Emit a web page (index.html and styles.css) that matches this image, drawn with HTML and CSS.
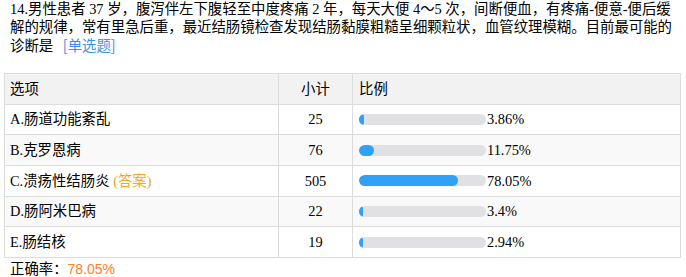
FILE: index.html
```html
<!DOCTYPE html>
<html lang="zh-CN">
<head>
<meta charset="utf-8">
<title>题目统计</title>
<link rel="stylesheet" href="styles.css">
</head>
<body>
<div class="page">
  <p class="question">14.男性患者 37 岁，腹泻伴左下腹轻至中度疼痛 2 年，每天大便 4～5 次，间断便血，有疼痛-便意-便后缓解的规律，常有里急后重，最近结肠镜检查发现结肠黏膜粗糙呈细颗粒状，血管纹理模糊。目前最可能的诊断是 <span class="qtype">[单选题]</span></p>
  <table class="stats">
    <thead>
      <tr><th class="c-opt">选项</th><th class="c-num">小计</th><th class="c-pct">比例</th></tr>
    </thead>
    <tbody>
      <tr><td class="c-opt">A.肠道功能紊乱</td><td class="c-num">25</td><td class="c-pct"><div class="pct"><span class="track"><span class="fill" style="width:3.86%"></span></span><span class="val">3.86%</span></div></td></tr>
      <tr><td class="c-opt">B.克罗恩病</td><td class="c-num">76</td><td class="c-pct"><div class="pct"><span class="track"><span class="fill" style="width:11.75%"></span></span><span class="val">11.75%</span></div></td></tr>
      <tr><td class="c-opt">C.溃疡性结肠炎 <span class="ans">(答案)</span></td><td class="c-num">505</td><td class="c-pct"><div class="pct"><span class="track"><span class="fill" style="width:78.05%"></span></span><span class="val">78.05%</span></div></td></tr>
      <tr><td class="c-opt">D.肠阿米巴病</td><td class="c-num">22</td><td class="c-pct"><div class="pct"><span class="track"><span class="fill" style="width:3.4%"></span></span><span class="val">3.4%</span></div></td></tr>
      <tr><td class="c-opt">E.肠结核</td><td class="c-num">19</td><td class="c-pct"><div class="pct"><span class="track"><span class="fill" style="width:2.94%"></span></span><span class="val">2.94%</span></div></td></tr>
    </tbody>
  </table>
  <div class="rate">正确率：<span class="rate-val">78.05%</span></div>
</div>
</body>
</html>
```

FILE: styles.css
```css
* { box-sizing: border-box; }
html, body {
  margin: 0;
  padding: 0;
  background: #ffffff;
}
body {
  font-family: "Liberation Serif", "Noto Sans CJK SC", serif;
  font-size: 14.4px;
  color: #000;
}
.page {
  padding: 0 5px 0 4px;
}
.question {
  margin: 0 0 18px 0;
  padding: 0 6px;
  line-height: 18px;
}
.qtype {
  display: inline-block;
  line-height: 18px;
  height: 18px;
  color: #3d8fe3;
  margin-left: 6px;
  font-family: "Noto Sans CJK SC", sans-serif;
}
.stats {
  width: 677px;
  border-collapse: collapse;
  border: 1px solid #dcdcdc;
  table-layout: fixed;
}
.stats th, .stats td {
  border: 1px solid #dcdcdc;
  height: 30.67px;
  padding: 0 0 0 5px;
  font-weight: normal;
  line-height: 18px;
  vertical-align: middle;
}
.stats thead tr { background: #f2f2f2; }
.stats tbody tr:nth-child(even) { background: #f9f9f9; }
.c-opt { width: 274px; text-align: left; }
.stats .c-num { width: 74px; text-align: center; padding: 0; }
.stats .c-pct { text-align: left; padding-left: 6px; }
.ans { color: #f5a623; }
.pct {
  display: flex;
  align-items: center;
}
.track {
  display: block;
  width: 127px;
  height: 11px;
  border-radius: 6px;
  background: #e1e1e3;
  overflow: hidden;
}
.fill {
  display: block;
  height: 100%;
  background: #2fa1f6;
  border-radius: 6px;
}
.val { margin-left: 1px; }
.rate {
  padding-left: 6px;
  line-height: 20px;
  font-family: "Noto Sans CJK SC", sans-serif;
}
.rate-val {
  color: #ff7e27;
  font-family: "Liberation Sans", sans-serif;
  font-size: 14px;
}
```
